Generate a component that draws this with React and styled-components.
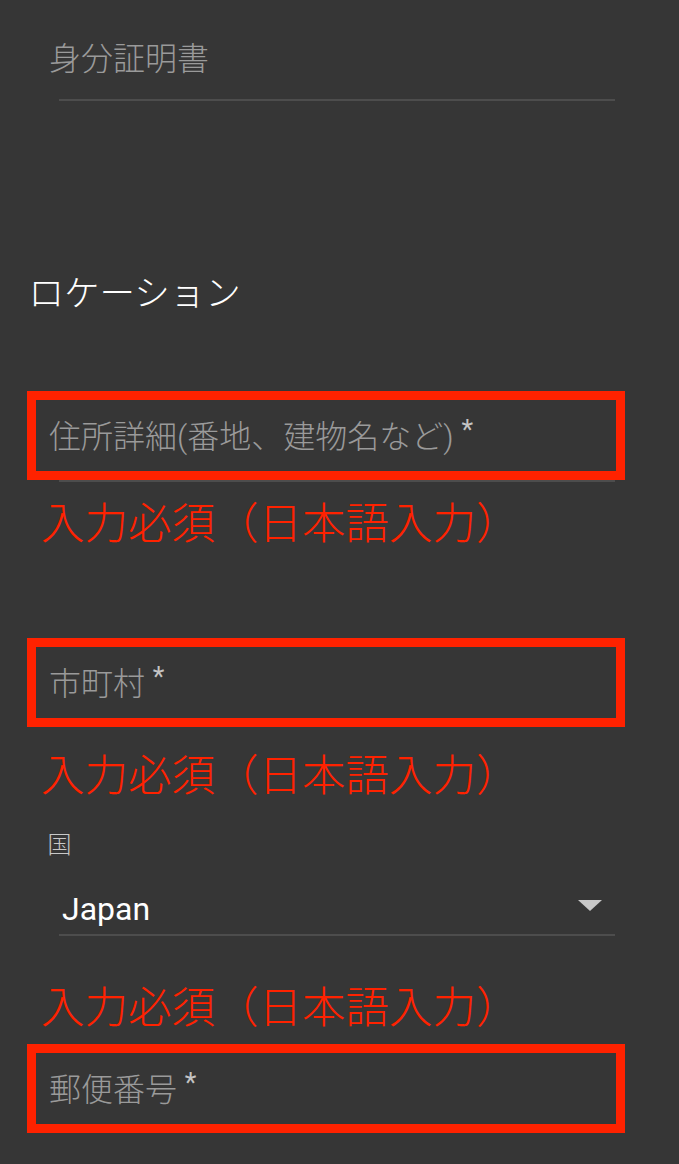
import React from 'react'
import styled, { createGlobalStyle } from 'styled-components'

const GlobalStyle = createGlobalStyle`
  html, body {
    margin: 0;
    background: #363636;
  }
  body {
    font-family: Roboto, 'Noto Sans CJK JP', sans-serif;
    -webkit-font-smoothing: antialiased;
  }
`

const Page = styled.main`
  width: 679px;
  min-height: 100vh;
  padding: 43px 0 31px;
  box-sizing: border-box;
  background: #363636;
`

const IdText = styled.div`
  padding-left: 49px;
  font-size: 32px;
  font-weight: 300;
  line-height: 1;
  color: #9a9a9a;
`

const Underline = styled.div`
  margin: ${(p) => p.$top || 0}px 64px 0 59px;
  height: 2px;
  background: #4d4d4d;
`

const SectionTitle = styled.h2`
  margin: 175.5px 0 0;
  padding-left: 28.5px;
  font-size: 35.5px;
  font-weight: 300;
  line-height: 1;
  color: #ffffff;
`

const HighlightBox = styled.div`
  box-sizing: border-box;
  width: 598px;
  height: 89px;
  margin: ${(p) => p.$top}px 0 0 27px;
  padding: 21px 13px 18px;
  border: 9px solid #ff2200;
`

const Placeholder = styled.div`
  font-size: 32px;
  font-weight: 300;
  line-height: 1;
  color: #9a9a9a;
  white-space: nowrap;
`

const Required = styled.span`
  font-size: 27px;
  font-weight: 400;
  color: #c4c4c4;
  line-height: 0;
  vertical-align: 9px;
`

const ErrorText = styled.div`
  margin-top: ${(p) => p.$top}px;
  padding-left: 41px;
  font-size: 43.5px;
  font-weight: 300;
  line-height: 1;
  color: #ff2200;
  white-space: nowrap;
`

const CountryLabel = styled.div`
  margin-top: 34px;
  padding-left: 47.5px;
  font-size: 24px;
  font-weight: 300;
  line-height: 1;
  color: #c8c8c8;
`

const SelectRow = styled.div`
  display: flex;
  align-items: center;
  justify-content: space-between;
  margin: 36.8px 64px 0 59px;
  padding: 0 13px 9.2px 3px;
  border-bottom: 2px solid #4d4d4d;
`

const SelectValue = styled.span`
  font-size: 32px;
  line-height: 1;
  color: #ffffff;
`

const Caret = styled.svg`
  display: block;
  margin-bottom: 7px;
`

const TextField = ({ label, top }) => (
  <HighlightBox $top={top}>
    <Placeholder>
      {label} <Required>*</Required>
    </Placeholder>
  </HighlightBox>
)

const REQUIRED_MSG = '入力必須（日本語入力）'

export default function App() {
  return (
    <Page>
      <GlobalStyle />
      <IdText>身分証明書</IdText>
      <Underline $top={24} />

      <SectionTitle>ロケーション</SectionTitle>

      <TextField label='住所詳細(番地、建物名など)' top={78.5} />
      <Underline />
      <ErrorText $top={21.5}>{REQUIRED_MSG}</ErrorText>

      <TextField label='市町村' top={91} />
      <ErrorText $top={28.5}>{REQUIRED_MSG}</ErrorText>

      <CountryLabel>国</CountryLabel>
      <SelectRow>
        <SelectValue>Japan</SelectValue>
        <Caret width='24' height='11' viewBox='0 0 24 11'>
          <polygon points='0,0 24,0 12,11' fill='#c8c8c8' />
        </Caret>
      </SelectRow>
      <ErrorText $top={50.5}>{REQUIRED_MSG}</ErrorText>

      <TextField label='郵便番号' top={14} />
    </Page>
  )
}
